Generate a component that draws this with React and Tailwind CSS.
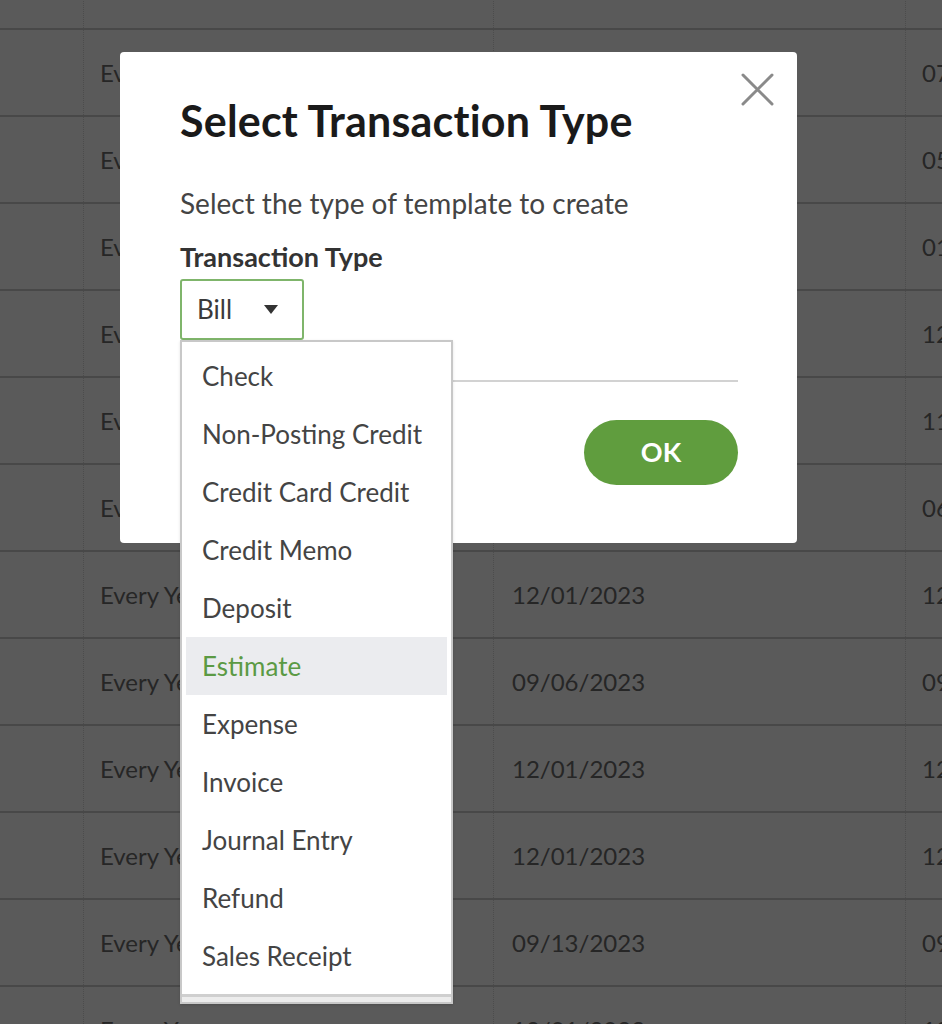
import React from "react";

const rows = [
  { freq: "Every Year", start: "12/01/2023", next: "12/01/2024" },
  { freq: "Every Year", start: "07/01/2023", next: "07/01/2024" },
  { freq: "Every Year", start: "05/01/2023", next: "05/01/2024" },
  { freq: "Every Year", start: "01/01/2023", next: "01/01/2024" },
  { freq: "Every Year", start: "12/01/2022", next: "12/01/2023" },
  { freq: "Every Year", start: "11/01/2022", next: "11/01/2023" },
  { freq: "Every Year", start: "06/01/2023", next: "06/01/2024" },
  { freq: "Every Year", start: "12/01/2023", next: "12/01/2024" },
  { freq: "Every Year", start: "09/06/2023", next: "09/06/2024" },
  { freq: "Every Year", start: "12/01/2023", next: "12/01/2024" },
  { freq: "Every Year", start: "12/01/2023", next: "12/01/2024" },
  { freq: "Every Year", start: "09/13/2023", next: "09/13/2024" },
  { freq: "Every Year", start: "12/01/2023", next: "12/01/2024" },
];

const types = [
  "Check",
  "Non-Posting Credit",
  "Credit Card Credit",
  "Credit Memo",
  "Deposit",
  "Estimate",
  "Expense",
  "Invoice",
  "Journal Entry",
  "Refund",
  "Sales Receipt",
];

export default function App() {
  return (
    <div
      className="relative h-screen w-full overflow-hidden bg-[#5a5a5a] text-[24px] text-[#262626]"
      style={{ fontFamily: "Lato, 'Open Sans', sans-serif" }}
    >
      {/* dimmed table behind the modal */}
      <div className="-mt-[57px]">
        {rows.map((r, i) => (
          <div
            key={i}
            className="grid h-[87px] grid-cols-[84px_410px_412px_1fr] border-b-2 border-[#484848]"
          >
            <div className="border-r border-dotted border-[#4c4c4c]" />
            <div className="flex items-center border-r border-dotted border-[#4c4c4c] px-4 whitespace-nowrap">
              {r.freq}
            </div>
            <div className="flex items-center border-r border-dotted border-[#4c4c4c] pl-[18px] whitespace-nowrap">
              {r.start}
            </div>
            <div className="flex items-center pl-4 whitespace-nowrap">{r.next}</div>
          </div>
        ))}
      </div>

      {/* modal */}
      <div className="absolute left-[120px] top-[52px] w-[677px] rounded-[4px] bg-white pt-[45px] pr-[59px] pb-[58px] pl-[60px]">
        <button className="absolute right-[23px] top-[21px] text-[#8a8a8a]">
          <svg width="33" height="33" viewBox="0 0 33 33" fill="none">
            <path
              d="M2 2L31 31M31 2L2 31"
              stroke="currentColor"
              strokeWidth="3"
              strokeLinecap="round"
            />
          </svg>
        </button>

        <h1 className="text-[43px] leading-[48px] font-bold tracking-[0.2px] text-[#1a1a1a]">
          Select Transaction Type
        </h1>
        <p className="mt-[41px] text-[28px] leading-[34px] text-[#444]">
          Select the type of template to create
        </p>
        <p className="mt-[20px] text-[27px] leading-[34px] font-bold text-[#333]">
          Transaction Type
        </p>

        <div className="relative mt-[5px] w-fit">
          <div className="flex h-[61px] w-[124px] items-center justify-between rounded-[3px] border-2 border-[#7fb56b] pl-[15px] pr-[24px] text-[26px] text-[#3a3a3a]">
            <span>Bill</span>
            <svg width="14" height="9" viewBox="0 0 14 9">
              <path d="M0 0H14L7 9Z" fill="#333" />
            </svg>
          </div>

          {/* open list */}
          <div className="absolute left-0 top-[61px] z-10 w-[273px] border-2 border-[#c8c8c8] bg-white pt-[5px] text-[26px] shadow-sm">
            {types.map((t) => (
              <div
                key={t}
                className={
                  t === "Estimate"
                    ? "mx-[4px] flex h-[58px] items-center bg-[#ebecef] px-[16px] text-[#5b9a44] whitespace-nowrap"
                    : "mx-[4px] flex h-[58px] items-center px-[16px] text-[#444] whitespace-nowrap"
                }
              >
                {t}
              </div>
            ))}
            <div className="mt-[9px] h-[8px] border-t-[3px] border-[#cfcfcf] bg-[#ececec]" />
          </div>
        </div>

        <div className="mt-[40px] h-[2px] bg-[#d2d2d2]" />

        <div className="mt-[38px] flex items-center justify-between">
          <button className="h-[65px] rounded-full border-2 border-[#b0b0b0] px-8 text-[#444]">
            Cancel
          </button>
          <button className="h-[65px] w-[154px] rounded-full bg-[#609d3e] text-[27px] font-bold text-white">
            OK
          </button>
        </div>
      </div>
    </div>
  );
}
